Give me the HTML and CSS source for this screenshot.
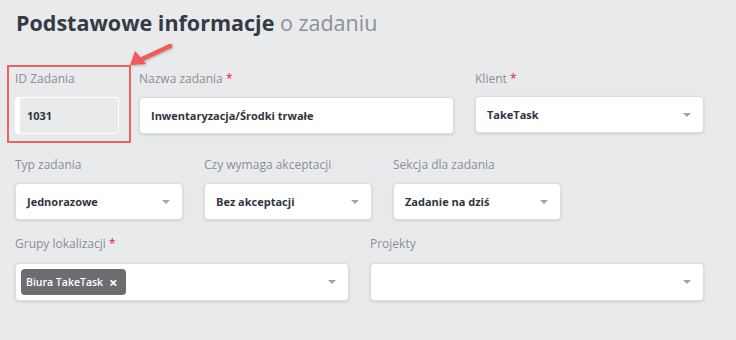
FILE: index.html
```html
<!DOCTYPE html>
<html lang="pl">
<head>
    <meta charset="UTF-8">
    <meta name="viewport" content="width=device-width, initial-scale=1.0">
    <title>Podstawowe informacje o zadaniu</title>
    <link rel="stylesheet" href="styles.css">
</head>
<body>
    <div class="page">
        <h1 class="title">Podstawowe informacje <span>o zadaniu</span></h1>

        <div class="row row-main">
            <div class="field field-id highlight">
                <label>ID Zadania</label>
                <div class="control control-readonly">1031</div>
            </div>
            <div class="field field-name">
                <label>Nazwa zadania <em>*</em></label>
                <div class="control">Inwentaryzacja/Środki trwałe</div>
            </div>
            <div class="field field-client">
                <label>Klient <em>*</em></label>
                <div class="control select">TakeTask</div>
            </div>
        </div>

        <div class="row row-options">
            <div class="field field-small">
                <label>Typ zadania</label>
                <div class="control select">Jednorazowe</div>
            </div>
            <div class="field field-small">
                <label>Czy wymaga akceptacji</label>
                <div class="control select">Bez akceptacji</div>
            </div>
            <div class="field field-small">
                <label>Sekcja dla zadania</label>
                <div class="control select">Zadanie na dziś</div>
            </div>
        </div>

        <div class="row row-groups">
            <div class="field field-half">
                <label>Grupy lokalizacji <em>*</em></label>
                <div class="control select multi">
                    <span class="tag">Biura TakeTask <b>&times;</b></span>
                </div>
            </div>
            <div class="field field-half">
                <label>Projekty</label>
                <div class="control select multi"></div>
            </div>
        </div>

        <svg class="pointer" width="60" height="36" viewBox="0 0 60 36">
            <line x1="50" y1="8" x2="20" y2="22" stroke="#f25b5b" stroke-width="4.5" stroke-linecap="round"/>
            <polygon points="10,27 15,13 26,26" fill="#f25b5b"/>
        </svg>
    </div>
</body>
</html>
```

FILE: styles.css
```css
body {
    margin: 0;
    background-color: #e9eaec;
    font-family: "Open Sans", "DejaVu Sans", sans-serif;
    color: #343944;
}
.page {
    position: relative;
    width: 736px;
    height: 340px;
    box-sizing: border-box;
    padding: 7px 15px 0 15px;
    overflow: hidden;
}
.title {
    margin: 0 0 0 1px;
    font-size: 21.5px;
    font-weight: 700;
    line-height: 32px;
    color: #353a45;
}
.title span {
    font-weight: 400;
    color: #8c9098;
}
.row {
    display: flex;
    align-items: flex-start;
}
.row-main {
    margin-top: 26px;
}
.row-options {
    margin-top: 13px;
    gap: 21px;
}
.row-groups {
    margin-top: 15px;
    gap: 21px;
}
.field label {
    display: block;
    font-size: 12px;
    line-height: 18px;
    color: #8a8f97;
    margin-bottom: 9px;
}
.field label em {
    font-style: normal;
    color: #e8202a;
}
.highlight {
    margin-left: -8px;
    border: 2px solid #f2605e;
    padding: 3px 10px 7px 6px;
}
.field-id .control {
    width: 104px;
}
.field-name {
    margin-left: 8px;
    padding-top: 5px;
}
.field-name .control {
    width: 315px;
}
.field-client {
    margin-left: 21px;
    padding-top: 5px;
}
.field-client .control {
    width: 229px;
    margin-top: -1px;
}
.field-small .control {
    width: 168px;
}
.field-half .control {
    width: 334px;
    height: 38px;
}
.row-groups .field label {
    margin-bottom: 10px;
}
.control {
    position: relative;
    box-sizing: border-box;
    height: 37px;
    padding: 0 11px;
    display: flex;
    align-items: center;
    background-color: #fff;
    border: 1px solid #dcdde0;
    border-radius: 4px;
    box-shadow: 0 1px 3px rgba(0, 0, 0, 0.12);
    font-size: 11px;
    font-weight: 700;
    color: #2f3440;
    white-space: nowrap;
}
.control-readonly {
    background-color: #e9eaec;
    border: 1px solid #fff;
    border-left: 5px solid #fff;
    box-shadow: none;
    padding-left: 7px;
}
.select::after {
    content: "";
    position: absolute;
    right: 12px;
    top: 50%;
    margin-top: -2px;
    border-left: 4px solid transparent;
    border-right: 4px solid transparent;
    border-top: 4px solid #a2a4a8;
}
.multi {
    padding-left: 5px;
}
.tag {
    display: inline-flex;
    align-items: center;
    height: 26px;
    padding: 0 8px 0 5px;
    background-color: #6b6d71;
    border-radius: 4px;
    color: #fff;
    font-size: 10.5px;
    font-weight: 600;
}
.tag b {
    margin-left: 6px;
    font-size: 15px;
    font-weight: 700;
    line-height: 1;
}
.pointer {
    position: absolute;
    left: 120px;
    top: 38px;
    filter: drop-shadow(1px 1px 1px rgba(0, 0, 0, 0.25));
}
```
